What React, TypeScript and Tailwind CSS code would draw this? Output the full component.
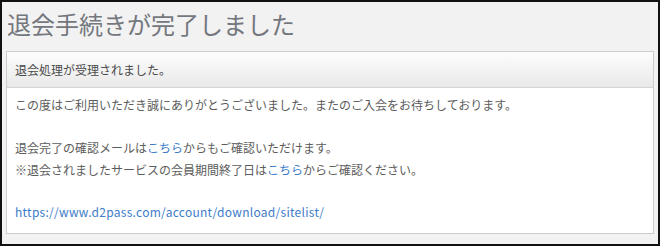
import React from "react";

const font = { fontFamily: '"Noto Sans CJK JP", "Noto Sans", sans-serif' };

export default function App() {
    return (
        <div
            className="w-[660px] h-[246px] bg-[#f2f2f2] border-2 border-[#111] overflow-hidden px-[4px]"
            style={font}
        >
            <h1 className="text-[24px] leading-[32px] text-[#74777d] pt-[6px] pl-[1px]">
                退会手続きが完了しました
            </h1>
            <div className="mt-[11px] border border-[#cccccc] bg-white">
                <div className="h-[36px] flex items-center px-[8px] bg-gradient-to-b from-[#fdfdfd] to-[#e9e9e9] border-b border-[#d4d4d4] text-[12px] text-[#4a4a4a]">
                    退会処理が受理されました。
                </div>
                <div className="px-[8px] pt-[6px] pb-[11px] text-[12px] leading-[21.5px] text-[#5c5c5c]">
                    <p>この度はご利用いただき誠にありがとうございました。またのご入会をお待ちしております。</p>
                    <p className="mt-[21.5px]">
                        退会完了の確認メールは<a className="text-[#3d7cc9]">こちら</a>からもご確認いただけます。
                    </p>
                    <p>
                        ※退会されましたサービスの会員期間終了日は<a className="text-[#3d7cc9]">こちら</a>からご確認ください。
                    </p>
                    <p className="mt-[20.5px]">
                        <a className="text-[#3d7cc9] tracking-[0.27px]">https://www.d2pass.com/account/download/sitelist/</a>
                    </p>
                </div>
            </div>
        </div>
    );
}
